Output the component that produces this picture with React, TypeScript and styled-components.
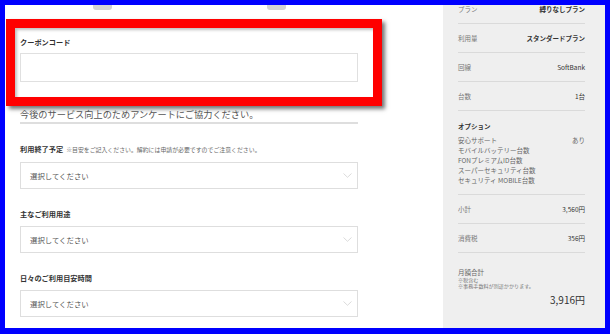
import * as React from "react";
import styled, { createGlobalStyle } from "styled-components";

const GlobalStyle = createGlobalStyle`
  html, body {
    margin: 0;
    padding: 0;
    background: #0000ff;
  }
  body {
    font-family: "Noto Sans CJK JP", "Noto Sans", sans-serif;
    color: #333;
  }
`;

interface ISummaryRow {
  label: string;
  value: string;
  strong?: boolean;
}

const planRows: ISummaryRow[] = [
  { label: "プラン", value: "縛りなしプラン", strong: true },
  { label: "利用量", value: "スタンダードプラン", strong: true },
  { label: "回線", value: "SoftBank" },
  { label: "台数", value: "1台" },
];

const options = [
  { label: "安心サポート", value: "あり" },
  { label: "モバイルバッテリー台数", value: "" },
  { label: "FONプレミアムID台数", value: "" },
  { label: "スーパーセキュリティ台数", value: "" },
  { label: "セキュリティ MOBILE台数", value: "" },
];

const fields = [
  { label: "利用終了予定", note: "※目安をご記入ください。解約には申請が必要ですのでご注意ください。" },
  { label: "主なご利用用途" },
  { label: "日々のご利用目安時間" },
];

const Frame = styled.div`
  width: 610px;
  height: 334px;
  box-sizing: border-box;
  padding: 5px 5px 6px 5px;
  overflow: hidden;
`;

const Screen = styled.div`
  display: flex;
  height: 100%;
  background: #fff;
  overflow: hidden;
`;

const Main = styled.div`
  width: 438px;
  flex: none;
`;

const TabRow = styled.div`
  position: relative;
  height: 5px;
  margin-bottom: 9px;
`;

const Tab = styled.div<{ $left: number }>`
  position: absolute;
  top: 0;
  left: ${(p) => p.$left}px;
  width: 19px;
  height: 5px;
  background: #d3d3d3;
  border-radius: 0 0 3px 3px;
`;

const CouponBox = styled.div`
  margin-left: 1px;
  width: 376px;
  height: 87px;
  box-sizing: border-box;
  border: 9px solid #ff0000;
  padding: 9px 15px 0 5px;
  box-shadow: 3px 3px 4px rgba(0, 0, 0, 0.55), inset 2px 2px 3px rgba(0, 0, 0, 0.25);
  background: #fff;
`;

const Label = styled.div`
  font-size: 7.2px;
  line-height: 10px;
  font-weight: 700;
  color: #333;
  margin-bottom: 6px;
  white-space: nowrap;
`;

const Note = styled.span`
  font-size: 5.9px;
  font-weight: 400;
  color: #666;
  margin-left: 3px;
`;

const Input = styled.div`
  height: 29px;
  box-sizing: border-box;
  border: 1px solid #e0e0e0;
  background: #fff;
`;

const Survey = styled.div`
  margin: 0 85px 0 15px;
`;

const SurveyTitle = styled.div`
  margin-top: 2px;
  padding-bottom: 2px;
  font-size: 9.2px;
  line-height: 12px;
  color: #555;
  border-bottom: 2px solid #dedede;
  white-space: nowrap;
`;

const Field = styled.div`
  margin-top: 20px;
`;

const FieldLabel = styled(Label)`
  margin-bottom: 7px;
`;

const Select = styled.div`
  display: flex;
  align-items: center;
  justify-content: space-between;
  height: 27px;
  box-sizing: border-box;
  border: 1px solid #dedede;
  padding: 0 5px 0 9px;
  font-size: 7.4px;
  color: #555;
`;

const Chevron = () => (
  <svg width="9" height="5" viewBox="0 0 9 5">
    <polyline points="0.5,0.5 4.5,4.3 8.5,0.5" fill="none" stroke="#d2d2d2" strokeWidth="0.8" />
  </svg>
);

const Sidebar = styled.div`
  width: 162px;
  flex: none;
  background: #efefef;
  box-sizing: border-box;
  padding: 0 20px 0 15px;
  overflow: hidden;
`;

const SummaryList = styled.div`
  margin-top: -10px;
`;

const Row = styled.div`
  display: flex;
  justify-content: space-between;
  padding: 9px 0;
  border-bottom: 1px solid #dadada;
  font-size: 6.5px;
  line-height: 10px;
`;

const RowLabel = styled.span`
  color: #777;
`;

const RowValue = styled.span<{ $strong?: boolean }>`
  color: #333;
  font-weight: ${(p) => (p.$strong ? 700 : 400)};
`;

const OptionBlock = styled.div`
  padding: 10px 0 9px;
  border-bottom: 1px solid #dadada;
  font-size: 6.5px;
`;

const OptionTitle = styled.div`
  font-weight: 700;
  line-height: 10px;
  margin-bottom: 4px;
  color: #333;
`;

const OptionLine = styled.div`
  display: flex;
  justify-content: space-between;
  line-height: 10px;
  color: #666;
`;

const Total = styled.div`
  padding-top: 14px;
`;

const TotalLabel = styled.div`
  font-size: 6.5px;
  line-height: 10px;
  color: #666;
`;

const TotalNote = styled.div`
  font-size: 5.1px;
  line-height: 6px;
  color: #777;
  white-space: nowrap;
`;

const TotalValue = styled.div`
  margin-top: 5px;
  text-align: right;
  font-size: 10px;
  line-height: 12px;
  color: #333;
`;

const App = () => (
  <Frame>
    <GlobalStyle />
    <Screen>
      <Main>
        <TabRow>
          <Tab $left={88} />
          <Tab $left={262} />
        </TabRow>
        <CouponBox>
          <Label>クーポンコード</Label>
          <Input />
        </CouponBox>
        <Survey>
          <SurveyTitle>今後のサービス向上のためアンケートにご協力ください。</SurveyTitle>
          {fields.map((f) => (
            <Field key={f.label}>
              <FieldLabel>
                {f.label}
                {f.note && <Note>{f.note}</Note>}
              </FieldLabel>
              <Select>
                選択してください
                <Chevron />
              </Select>
            </Field>
          ))}
        </Survey>
      </Main>
      <Sidebar>
        <SummaryList>
          {planRows.map((r) => (
            <Row key={r.label}>
              <RowLabel>{r.label}</RowLabel>
              <RowValue $strong={r.strong}>{r.value}</RowValue>
            </Row>
          ))}
          <OptionBlock>
            <OptionTitle>オプション</OptionTitle>
            {options.map((o) => (
              <OptionLine key={o.label}>
                <span>{o.label}</span>
                <span>{o.value}</span>
              </OptionLine>
            ))}
          </OptionBlock>
          <Row>
            <RowLabel>小計</RowLabel>
            <RowValue>3,560円</RowValue>
          </Row>
          <Row>
            <RowLabel>消費税</RowLabel>
            <RowValue>356円</RowValue>
          </Row>
          <Total>
            <TotalLabel>月額合計</TotalLabel>
            <TotalNote>※税含む</TotalNote>
            <TotalNote>※事務手数料が別途かかります。</TotalNote>
            <TotalValue>3,916円</TotalValue>
          </Total>
        </SummaryList>
      </Sidebar>
    </Screen>
  </Frame>
);

export default App;
